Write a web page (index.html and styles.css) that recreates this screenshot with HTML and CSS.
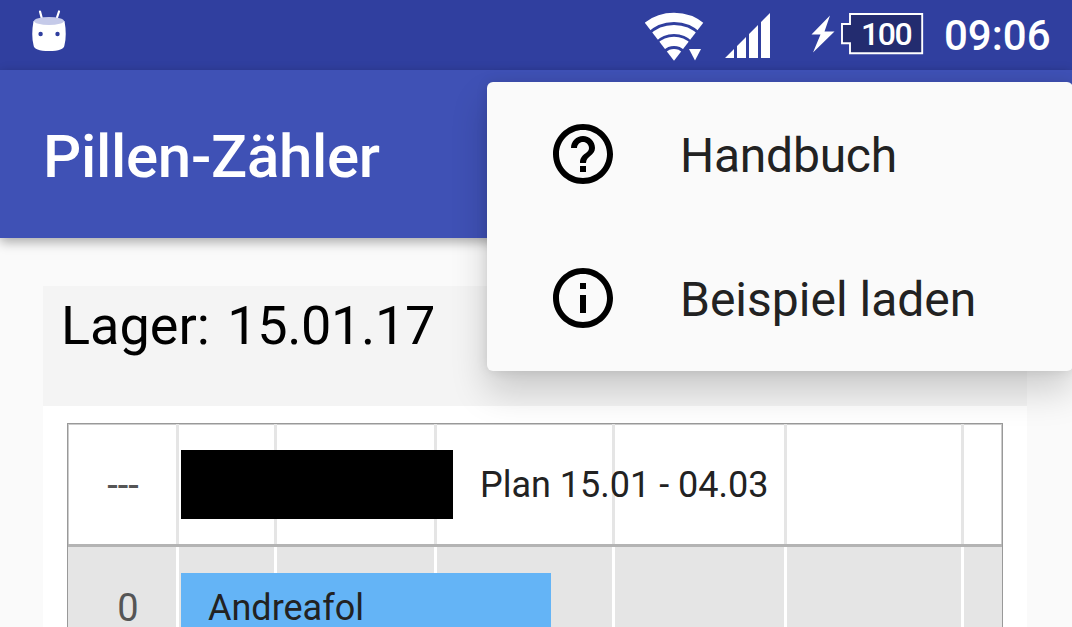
FILE: index.html
```html
<!DOCTYPE html>
<html lang="de">
<head>
<meta charset="utf-8">
<title>Pillen-Zähler</title>
<link rel="stylesheet" href="styles.css">
</head>
<body>
<div class="screen">
  <header class="status-bar">
    <svg class="robot" width="36" height="42" viewBox="0 0 36 42">
      <path d="M9 1.5 11 9M28 1.500 25.500 9" stroke="#fff" stroke-width="2.200" stroke-linecap="round"/>
      <path d="M2.500 11Q0 25 2.500 35Q3 41 18 41Q33 41 33.500 35Q36 25 33.500 11Z" fill="#fff"/>
      <ellipse cx="18" cy="11" rx="15" ry="4" fill="#c5cae9"/>
      <circle cx="9.600" cy="24" r="2.200" fill="#303f9f"/>
      <circle cx="26.500" cy="24" r="2.200" fill="#303f9f"/>
    </svg>
    <svg class="wifi" width="60" height="50" viewBox="0 0 60 50">
      <defs><clipPath id="fan"><path d="M29 48.700 -10 -2H68Z"/></clipPath></defs>
      <g clip-path="url(#fan)" fill="none" stroke="#fff" stroke-width="9.200">
        <circle cx="29" cy="48.700" r="43.400"/>
        <circle cx="29" cy="48.700" r="31.200"/>
        <circle cx="29" cy="48.700" r="19.400"/>
        <circle cx="29" cy="48.700" r="11.700" fill="#fff" stroke="none"/>
      </g>
      <path d="M44 37H56L50 48.500Z" fill="#fff"/>
    </svg>
    <svg class="signal" width="46" height="46" viewBox="0 0 46 46" fill="#fff">
      <path d="M0 45 9 36V45ZM12 45V33L21 24V45ZM24 45V21L33 12V45ZM36 45V9L45 0V45Z"/>
    </svg>
    <svg class="bolt" width="24" height="38" viewBox="0 0 24 38"><path d="M19 .5 .5 19.500H9.500L2 37.500 23.500 16.500H13.500Z" fill="#fff"/></svg>
    <div class="battery">
      <svg width="83" height="42" viewBox="0 0 83 42"><path d="M9 1H81.200V40.200H9V30.300H1V11H9Z" fill="#232c6f" stroke="#fff" stroke-width="1.900"/></svg>
      <span class="level">100</span>
    </div>
    <span class="clock">09:06</span>
  </header>
  <div class="app-bar"><h1 class="title">Pillen-Zähler</h1></div>
  <main class="card">
    <div class="card-head">Lager: <span class="date">15.01.17</span></div>
    <div class="chart">
      <div class="row">
        <div class="cell days">---</div><div class="cell"></div><div class="cell"></div><div class="cell"></div><div class="cell"></div><div class="cell"></div><div class="cell"></div>
        <div class="bar bar-plan"></div><span class="plan">Plan 15.01 - 04.03</span>
      </div>
      <div class="row row-alt">
        <div class="cell days count">0</div><div class="cell"></div><div class="cell"></div><div class="cell"></div><div class="cell"></div><div class="cell"></div><div class="cell"></div>
        <div class="bar bar-med"><span class="med">Andreafol</span></div>
      </div>
    </div>
  </main>
  <nav class="menu">
    <div class="menu-item">
      <svg width="72" height="72" viewBox="0 0 24 24"><path d="M11 18h2v-2h-2v2zm1-16C6.480 2 2 6.480 2 12s4.480 10 10 10 10-4.480 10-10S17.520 2 12 2zm0 18c-4.410 0-8-3.590-8-8s3.590-8 8-8 8 3.590 8 8-3.590 8-8 8zm0-14c-2.210 0-4 1.790-4 4h2c0-1.100.9-2 2-2s2 .9 2 2c0 2-3 1.750-3 5h2c0-2.250 3-2.500 3-5 0-2.210-1.790-4-4-4z"/></svg>
      <span class="label label-manual">Handbuch</span>
    </div>
    <div class="menu-item">
      <svg width="72" height="72" viewBox="0 0 24 24"><path d="M11 17h2v-6h-2v6zm1-15C6.480 2 2 6.480 2 12s4.480 10 10 10 10-4.480 10-10S17.520 2 12 2zm0 18c-4.410 0-8-3.590-8-8s3.590-8 8-8 8 3.590 8 8-3.590 8-8 8zM11 9h2V7h-2v2z"/></svg>
      <span class="label">Beispiel laden</span>
    </div>
  </nav>
</div>
</body>
</html>
```
FILE: styles.css
```css
* { box-sizing: border-box; }
body { margin: 0; font-family: Roboto, sans-serif; }
svg { display: block; flex: none; }

.screen {
  position: relative;
  width: 1072px;
  height: 627px;
  overflow: hidden;
  background: #fafafa;
}

.status-bar {
  display: flex;
  height: 70px;
  padding-left: 31px;
  background: #303f9f;
  color: #fff;
}
.robot { margin-top: 10px; }
.wifi { margin: 12px 0 0 578px; }
.signal { margin: 13px 0 0 20px; }
.bolt { margin: 15px 0 0 40px; }
.battery { position: relative; margin: 13px 0 0 6px; }
.level {
  position: absolute;
  left: 20px;
  top: 2px;
  font-size: 32px;
  line-height: 38px;
  font-weight: 500;
  letter-spacing: -1.4px;
}
.clock {
  margin: 11px 0 0 20px;
  font-size: 42px;
  line-height: 50px;
  font-weight: 500;
}

.app-bar {
  display: flex;
  position: relative;
  height: 168px;
  padding: 52px 0 0 43px;
  background: #3f51b5;
  box-shadow: 0 4px 11px rgba(0, 0, 0, .33);
}
.title {
  margin: 0;
  color: #fff;
  font-size: 60px;
  line-height: 70px;
  font-weight: 500;
  letter-spacing: -.3px;
}

.card {
  width: 984px;
  height: 360px;
  margin: 48px 0 0 43px;
  background: #fff;
}
.card-head {
  height: 120px;
  padding: 7px 0 0 18px;
  background: #f4f4f4;
  color: #000;
  font-size: 54px;
  line-height: 66px;
}
.date { margin-left: 4px; letter-spacing: -.35px; }
.chart {
  width: 936px;
  height: 240px;
  margin: 17px 0 0 24px;
  border: 1px solid #999;
  box-shadow: inset 0 0 0 1px #ccc;
}
.row {
  display: grid;
  grid-template-columns: 111px 98px 160px 178px 172px 177px 38px;
  position: relative;
  height: 123px;
  border-bottom: 3px solid #b4b4b4;
}
.row-alt { background: #e5e5e5; }
.cell { border-right: 3px solid #e5e5e5; }
.row-alt .cell { border-color: #fff; }
.row .cell:nth-child(7) { border: 0; }
.days {
  padding: 38px 0 0 2px;
  color: #555;
  font-size: 38px;
  line-height: 46px;
  text-align: center;
}
.count { padding-left: 12px; }
.bar { position: absolute; left: 112px; top: 26px; height: 69px; }
.row .bar { left: 113px; }
.bar-plan { width: 272px; background: #000; }
.bar-med { width: 369.5px; padding: 14px 0 0 27px; background: #64b4f6; }
.plan { position: absolute; left: 412px; top: 40px; }
.plan, .med { color: #222; font-size: 36px; line-height: 43px; white-space: nowrap; }

.menu {
  position: absolute;
  left: 487px;
  top: 82px;
  width: 586px;
  height: 289px;
  border-radius: 6px;
  background: #fafafa;
  box-shadow: 0 20px 36px rgba(0, 0, 0, .18), 0 0 12px rgba(0, 0, 0, .1);
}
.menu-item {
  display: flex;
  align-items: center;
  height: 144px;
  padding-left: 60px;
}
.label { margin: 4px 0 0 61px; color: #222; font-size: 48px; line-height: 56px; white-space: nowrap; }
.label-manual { letter-spacing: -.25px; }
```
